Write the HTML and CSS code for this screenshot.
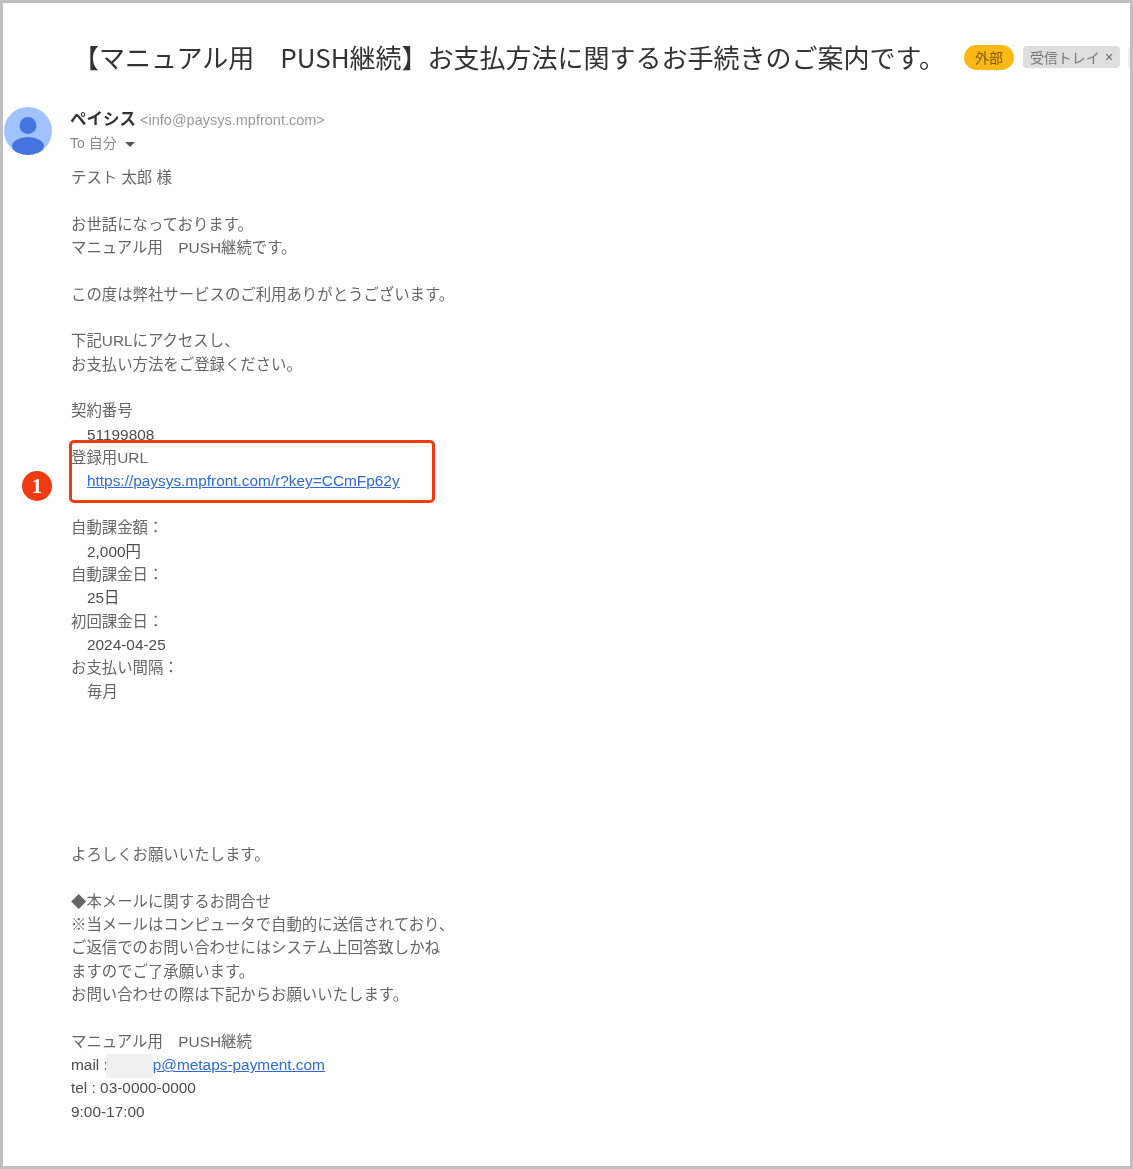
FILE: index.html
```html
<!DOCTYPE html>
<html lang="ja">
<head>
<meta charset="utf-8">
<title>お支払方法に関するお手続きのご案内</title>
<link rel="stylesheet" href="styles.css">
</head>
<body>
<main class="frame">
  <header class="subject">
    <h1 class="subject-title">【マニュアル用　PUSH継続】お支払方法に関するお手続きのご案内です。</h1>
    <span class="chip chip-external">外部</span>
    <span class="chip chip-inbox">受信トレイ<span class="chip-x">×</span></span>
    <span class="chip chip-stub"></span>
  </header>
  <section class="sender">
    <svg class="avatar" viewBox="0 0 48 48" aria-hidden="true">
      <circle cx="24" cy="24" r="24" fill="#a0c3ff"/>
      <circle cx="24" cy="18.5" r="8.5" fill="#4374e0"/>
      <ellipse cx="24" cy="39" rx="16" ry="9" fill="#4374e0"/>
    </svg>
    <div class="sender-meta">
      <div class="sender-line"><strong class="sender-name">ペイシス</strong> <span class="sender-mail">&lt;info@paysys.mpfront.com&gt;</span></div>
      <div class="sender-to">To 自分 <span class="caret"></span></div>
    </div>
  </section>
  <article class="body">
    <p>テスト 太郎 様</p>
    <p class="blank"></p>
    <p>お世話になっております。</p>
    <p>マニュアル用　PUSH継続です。</p>
    <p class="blank"></p>
    <p>この度は弊社サービスのご利用ありがとうございます。</p>
    <p class="blank"></p>
    <p>下記URLにアクセスし、</p>
    <p>お支払い方法をご登録ください。</p>
    <p class="blank"></p>
    <p>契約番号</p>
    <p class="indent dark">51199808</p>
    <div class="highlighted">
      <p>登録用URL</p>
      <p class="indent"><a href="#">https://paysys.mpfront.com/r?key=CCmFp62y</a></p>
      <span class="callout-box"></span>
      <span class="callout-num">1</span>
    </div>
    <p class="blank"></p>
    <p>自動課金額：</p>
    <p class="indent dark">2,000円</p>
    <p>自動課金日：</p>
    <p class="indent dark">25日</p>
    <p>初回課金日：</p>
    <p class="indent dark">2024-04-25</p>
    <p>お支払い間隔：</p>
    <p class="indent">毎月</p>
    <div class="gap"></div>
    <p>よろしくお願いいたします。</p>
    <p class="blank"></p>
    <p>◆本メールに関するお問合せ</p>
    <p>※当メールはコンピュータで自動的に送信されており、</p>
    <p>ご返信でのお問い合わせにはシステム上回答致しかね</p>
    <p>ますのでご了承願います。</p>
    <p>お問い合わせの際は下記からお願いいたします。</p>
    <p class="blank"></p>
    <p>マニュアル用　PUSH継続</p>
    <p class="dark">mail :<span class="redact"></span><a href="#">p@metaps-payment.com</a></p>
    <p class="dark">tel : 03-0000-0000</p>
    <p class="dark">9:00-17:00</p>
  </article>
</main>
</body>
</html>
```
FILE: styles.css
```css
* { box-sizing: border-box; }
html, body { margin: 0; padding: 0; background: #fff; }
.frame {
  width: 1133px;
  height: 1169px;
  border: 3px solid #bfbfbf;
  background: #fff;
  overflow: hidden;
  font-family: "Liberation Sans", "Noto Sans CJK JP", sans-serif;
  color: #666;
}
.subject {
  display: flex;
  align-items: center;
  height: 84px;
  padding: 24px 0 0 70px;
}
.subject-title {
  margin: 0;
  font-size: 26px;
  line-height: 36px;
  font-weight: 400;
  color: #333;
  white-space: nowrap;
  font-family: "Noto Sans CJK JP", sans-serif;
  filter: blur(.3px);
}
.chip {
  display: inline-flex;
  align-items: center;
  justify-content: center;
  flex: none;
  height: 25px;
  font-size: 14px;
  filter: blur(.3px);
  font-family: "Noto Sans CJK JP", sans-serif;
}
.chip-external {
  width: 50px;
  margin-left: 19px;
  border-radius: 13px;
  background: #fdb813;
  color: #7a5a10;
}
.chip-inbox {
  width: 97px;
  height: 22px;
  margin-left: 9px;
  border-radius: 4px;
  background: #dedede;
  color: #777;
}
.chip-x { margin-left: 5px; color: #666; font-size: 14px; font-family: "Liberation Sans", sans-serif; }
.chip-stub {
  width: 6px;
  height: 22px;
  margin-left: 8px;
  border-radius: 4px 0 0 4px;
  background: #eee;
}
.sender {
  display: flex;
  align-items: flex-start;
  margin-top: 20px;
  padding-left: 1px;
  gap: 18px;
}
.avatar { width: 48px; height: 48px; flex: none; }
.sender-meta { display: flex; flex-direction: column; }
.sender-line { height: 24px; line-height: 22px; font-size: 14.5px; white-space: nowrap; filter: blur(.3px); }
.sender-name { color: #333; font-size: 16.5px; font-weight: 700; font-family: "Noto Sans CJK JP", sans-serif; }
.sender-mail { color: #999; font-size: 14.5px; }
.sender-to { height: 24px; line-height: 24px; font-size: 14px; color: #888; filter: blur(.3px); }
.caret {
  display: inline-block;
  width: 0;
  height: 0;
  margin-left: 4px;
  vertical-align: middle;
  border: 5px solid transparent;
  border-top-color: #555;
  border-bottom-width: 0;
}
.body {
  margin-top: 11px;
  padding-left: 68px;
  font-size: 15.4px;
  line-height: 23.35px;
  filter: blur(.35px);
}
.body p { margin: 0; height: 23.35px; white-space: nowrap; }
.indent { padding-left: 16px; }
.dark { color: #4d4d4d; }
a { color: #2e6bd6; text-decoration: underline; }
.gap { height: 140.1px; }
.highlighted { position: relative; }
.callout-box {
  position: absolute;
  left: -2px;
  top: -6px;
  width: 366px;
  height: 63px;
  border: 3px solid #f03a0f;
  border-radius: 5px;
}
.callout-num {
  position: absolute;
  left: -49px;
  top: 25px;
  width: 30px;
  height: 30px;
  border-radius: 50%;
  background: #f03a0f;
  color: #fff;
  font-size: 21px;
  line-height: 30px;
  text-align: center;
  font-family: "Liberation Serif", serif;
  font-weight: 700;
}
.redact {
  display: inline-block;
  width: 47px;
  height: 24px;
  margin-left: -2px;
  vertical-align: middle;
  background: #f0f0f0;
}
```
